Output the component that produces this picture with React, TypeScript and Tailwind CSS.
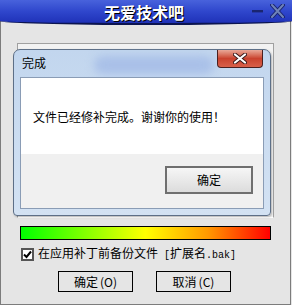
import React from 'react'

const cjk = "font-['Noto_Sans_CJK_SC',sans-serif]"
const mono = "font-['Liberation_Mono',monospace] text-[10px]"

function TitleIcons() {
  return (
    <div className="flex items-center gap-[7px] pr-[7px] pb-[2px]">
      <svg width="11" height="4" viewBox="0 0 11 4"><rect x="0" y="1" width="11" height="2.4" fill="#1a2570" /></svg>
      <svg width="15" height="14" viewBox="0 0 15 14">
        <path d="M2 1 L13 13 M13 1 L2 13" stroke="#1a2570" strokeWidth="4" strokeLinecap="round" />
        <path d="M2 1 L13 13 M13 1 L2 13" stroke="#6f83b8" strokeWidth="2" strokeLinecap="round" />
      </svg>
    </div>
  )
}

// Win7-style message box floating over the patcher window
function DoneDialog() {
  return (
    <div className="absolute left-[13px] top-[49px] w-[258px] h-[167px] flex flex-col px-[6px] pb-[6px] rounded-t-[7px] rounded-b-[4px] border border-[#5d6f87] bg-gradient-to-b from-[#c2d6ee] to-[#d3e2f3] shadow-[1px_1px_2px_rgba(0,0,0,0.25)]">
      <div className="absolute left-[80px] top-[6px] w-[120px] h-[18px] rounded-full bg-[#a9c0e8] blur-[4px]" />
      <div className="relative h-[27px] pl-[2px] pt-[4px] text-[12px] leading-[18px] text-black">完成</div>
      <div className="absolute right-[7px] top-0 w-[46px] h-[18px] rounded-b-[4px] border border-t-0 border-[#4a2020] bg-gradient-to-b from-[#e8a898] via-[#c9422e] to-[#d8604a] flex items-center justify-center">
        <svg width="14" height="11" viewBox="0 0 14 11">
          <path d="M2 1.5 L12 9.5 M12 1.5 L2 9.5" stroke="#3a1a1a" strokeWidth="4" strokeLinecap="round" />
          <path d="M2 1.5 L12 9.5 M12 1.5 L2 9.5" stroke="#ffffff" strokeWidth="2.2" strokeLinecap="round" />
        </svg>
      </div>
      <div className="relative flex-1 border border-[#8a9cb5] bg-[#f0f0f0] flex flex-col">
        <div className="h-[76px] bg-white pl-[12px] pt-[30px] text-[12px] leading-[18px] text-black">文件已经修补完成。谢谢你的使用！</div>
        <div className="flex-1 flex justify-end items-start pt-[12px] pr-[10px]">
          <div className="w-[88px] h-[28px] border-2 border-[#6f6f6f] bg-gradient-to-b from-[#f6f6f6] to-[#dcdcdc] flex items-center justify-center text-[12px] text-black">
            确定
          </div>
        </div>
      </div>
    </div>
  )
}

export default function App() {
  return (
    <div className={`${cjk} relative w-[292px] h-[305px] overflow-hidden bg-[#e5e5e5] select-none flex flex-col`}>
      <div className="relative z-10 h-[25px] shrink-0 flex items-center rounded-bl-[146px_4px] rounded-br-[146px_4px] border-b-2 border-[#0b1450] bg-gradient-to-b from-[#4862dc] via-[#2f46cc] to-[#1f31b8]">
        <div className="flex-1 pl-[36px] text-center text-white font-bold text-[16px] leading-[24px] [text-shadow:1px_1px_0_#000]">无爱技术吧</div>
        <TitleIcons />
      </div>

      <div className="flex-1 -mt-[4px] pt-[4px] mr-[1px] border-l border-r border-b border-[#7c7c7c] pl-[16px] flex flex-col items-start">
        <div className="mt-[18px] w-[257px] h-[175px] border border-[#a0a0a0] border-b-white bg-[#f2f2f2]" />

        <div className="mt-[8px] ml-[3px] w-[251px] h-[14px] border border-black bg-[linear-gradient(to_right,#00ff00,#ffff00_50%,#ff9900_75%,#ff0000)]" />

        <div className="mt-[6px] ml-[4px] flex items-center">
          <div className="w-[13px] h-[13px] border-2 border-[#555] bg-white flex items-center justify-center">
            <svg width="9" height="9" viewBox="0 0 9 9"><path d="M1 4.5 L3.5 7 L8 1.5" stroke="#000" strokeWidth="2" fill="none" /></svg>
          </div>
          <span className="ml-[4px] text-[12px] leading-[14px] text-black whitespace-nowrap">
            在应用补丁前备份文件<span className={mono}> [</span>扩展名<span className={mono}>.bak]</span>
          </span>
        </div>

        <div className="mt-[8px] ml-[41px] flex gap-[23px]">
          <div className="w-[75px] h-[21px] border border-black flex items-center justify-center text-[12px] text-black">确定<span className="ml-[2px]">(O)</span></div>
          <div className="w-[75px] h-[21px] border border-black flex items-center justify-center text-[12px] text-black">取消<span className="ml-[2px]">(C)</span></div>
        </div>
      </div>

      <DoneDialog />
    </div>
  )
}
